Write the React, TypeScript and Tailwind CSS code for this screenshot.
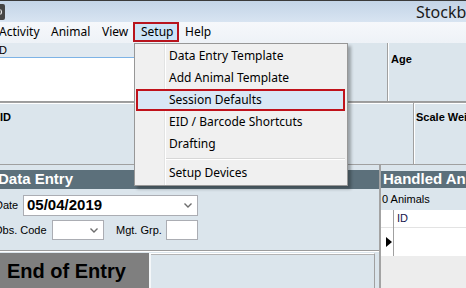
import * as React from "react";

const menuFont = { fontFamily: '"Noto Sans", "Open Sans", sans-serif' };
const formFont = { fontFamily: '"Liberation Sans", Arial, sans-serif' };

function Chevron() {
  return (
    <svg width="8" height="5" viewBox="0 0 8 5" className="shrink-0">
      <path d="M0.5 0.5 L4 4 L7.5 0.5" fill="none" stroke="#6d6d6d" strokeWidth="1.4" />
    </svg>
  );
}

const MENU_ITEMS = [
  "Data Entry Template",
  "Add Animal Template",
  "Session Defaults",
  "EID / Barcode Shortcuts",
  "Drafting",
];

function SetupMenu() {
  return (
    <div
      className="absolute left-[134px] top-[43px] w-[214px] h-[143px] border border-[#979797] bg-[#f0f0f0] shadow-[3px_3px_3px_rgba(0,0,0,0.3)] pt-[1px] pl-[1px] pr-[2px] text-[12px] text-black"
      style={menuFont}
    >
      <div className="absolute left-[29px] top-0 bottom-0 w-px bg-[#e2e3e3]" />
      <div className="absolute left-[30px] top-0 bottom-0 w-px bg-white" />
      {MENU_ITEMS.map((label) =>
        label === "Session Defaults" ? (
          <div
            key={label}
            className="relative flex h-[22px] items-center whitespace-nowrap border-2 border-[#c0121b] bg-[#d9e7f5] pl-[31px]"
          >
            {label}
          </div>
        ) : (
          <div key={label} className="relative flex h-[22px] items-center whitespace-nowrap pl-[33px]">
            {label}
          </div>
        )
      )}
      <div className="relative flex h-[7px] items-center pl-[30px]">
        <div className="h-px w-full bg-[#d7d7d7] shadow-[0_1px_0_#fff]" />
      </div>
      <div className="relative flex h-[22px] items-center whitespace-nowrap pl-[33px]">
        Setup Devices
      </div>
    </div>
  );
}

export default function App() {
  return (
    <div
      className="relative flex h-[288px] w-[466px] flex-col overflow-hidden bg-[#dbe5ec]"
      style={formFont}
    >
      {/* title bar */}
      <div className="flex h-[22px] shrink-0 items-center border-t border-[#3a3a3a] bg-gradient-to-b from-[#c3d4e7] to-[#d8e4f1]">
        <div className="flex h-[16px] w-[7px] items-center justify-end rounded-r-[2px] bg-[#454545] pr-[2px]">
          <svg width="3" height="6" viewBox="0 0 3 6">
            <path d="M0.5 0.5 Q2.5 3 0.5 5.5" fill="none" stroke="#e8e8e8" strokeWidth="1.2" />
          </svg>
        </div>
        <span className="ml-[411px] whitespace-nowrap text-[16px] text-[#1a1a1a]" style={menuFont}>
          Stockbook
        </span>
      </div>

      {/* menu bar */}
      <div
        className="flex h-[21px] shrink-0 items-start bg-gradient-to-b from-[#f6f8fb] to-[#eef2f7] text-[12px] text-black"
        style={menuFont}
      >
        <div className="ml-[-1px] flex h-[20px] w-[44px] shrink-0 items-center">Activity</div>
        <div className="flex h-[20px] w-[52px] shrink-0 items-center pl-[8px]">Animal</div>
        <div className="flex h-[20px] w-[38px] shrink-0 items-center pl-[7px]">View</div>
        <div className="flex h-[20px] w-[46px] shrink-0 items-center border-2 border-[#b8141d] bg-[#cce4f7] pl-[6px]">
          Setup
        </div>
        <div className="flex h-[20px] shrink-0 items-center pl-[6px]">Help</div>
      </div>

      {/* top row: list, spacer, age */}
      <div className="flex h-[59px] shrink-0 border-b border-[#9c9c9c]">
        <div className="flex w-[347px] shrink-0 flex-col">
          <div className="flex h-[15px] items-center border-b border-[#7db3e6] bg-[#e1e9f0] text-[11px]">
            <span className="ml-[-4px]">ID</span>
          </div>
          <div className="flex-1 bg-white" />
        </div>
        <div className="w-[40px] shrink-0" />
        <div className="flex-1 border-l border-[#a0a0a0] pl-[3px] pt-[3px] shadow-[inset_1px_0_0_#fff]">
          <span className="text-[11px] font-bold">Age</span>
        </div>
      </div>

      {/* second row: EID, scale weight */}
      <div className="flex h-[63px] shrink-0 border-y border-[#a0a0a0] shadow-[inset_0_1px_0_#fff]">
        <div className="w-[413px] shrink-0 pt-[6px] text-[11px] font-bold">ID</div>
        <div className="flex-1 whitespace-nowrap border-l border-[#a0a0a0] pl-[2px] pt-[6px] text-[11px] font-bold shadow-[inset_1px_0_0_#fff]">
          Scale Weight
        </div>
      </div>

      {/* data entry + handled animals */}
      <div className="flex min-h-0 flex-1">
        <div className="flex w-[379px] shrink-0 flex-col pt-[5px]">
          <div className="flex h-[19px] shrink-0 items-center bg-[#5c707b] text-[15px] font-bold text-white">
            <span className="ml-[-2px]">Data Entry</span>
          </div>
          <div className="flex h-[62px] shrink-0 flex-col gap-[4px] border-b border-[#9c9c9c] pt-[6px] text-[11px]">
            <div className="flex h-[21px] items-center">
              <span className="ml-[-5px] w-[28px] shrink-0">Date</span>
              <div className="flex h-[21px] w-[175px] items-center justify-between border border-[#abadb3] bg-white pl-[3px] pr-[5px]">
                <span className="text-[15px] font-bold">05/04/2019</span>
                <Chevron />
              </div>
            </div>
            <div className="flex h-[20px] items-center">
              <span className="ml-[-6px] w-[58px] shrink-0 whitespace-nowrap">Obs. Code</span>
              <div className="flex h-[20px] w-[52px] items-center justify-end border border-[#abadb3] bg-white pr-[5px]">
                <Chevron />
              </div>
              <span className="ml-[12px] w-[50px] shrink-0 whitespace-nowrap">Mgt. Grp.</span>
              <div className="h-[20px] w-[32px] border border-[#abadb3] bg-white" />
            </div>
          </div>
          <div className="flex min-h-0 flex-1 pt-[2px] shadow-[inset_0_1px_0_#fff]">
            <div className="flex w-[149px] shrink-0 items-center bg-[#7f7f7f] pl-[7px] text-[20px] font-bold text-black">
              End of Entry
            </div>
            <div className="mr-[4px] flex-1 border-l-2 border-t border-r border-l-[#f4f7f9] border-t-[#ffffff] border-r-[#a0a0a0] shadow-[inset_0_1px_0_#b4b4b4]" />
          </div>
        </div>
        <div className="flex flex-1 flex-col border-l-2 border-[#a3a3a3] pt-[6px]">
          <div className="flex h-[17px] shrink-0 items-center bg-[#5c707b] pl-[2px] text-[15px] font-bold whitespace-nowrap text-white">
            Handled Animals
          </div>
          <div className="flex h-[22px] shrink-0 items-center pl-[1px] text-[11px]">0 Animals</div>
          <div className="flex h-[46px] shrink-0 bg-white">
            <div className="flex w-[13px] shrink-0 flex-col border-r border-[#a0a0a0]">
              <div className="h-[18px] border-b border-[#e3e3e3]" />
              <div className="flex flex-1 items-center pl-[5px]">
                <svg width="6" height="10" viewBox="0 0 6 10">
                  <path d="M0 0 L6 5 L0 10 Z" fill="#000" />
                </svg>
              </div>
            </div>
            <div className="flex flex-1 flex-col">
              <div className="flex h-[18px] items-center border-b border-[#e3e3e3] pl-[3px] text-[11px] text-[#14144a]">
                ID
              </div>
              <div className="flex-1" />
            </div>
          </div>
          <div className="flex-1 bg-[#ededed]" />
        </div>
      </div>

      <SetupMenu />
    </div>
  );
}
